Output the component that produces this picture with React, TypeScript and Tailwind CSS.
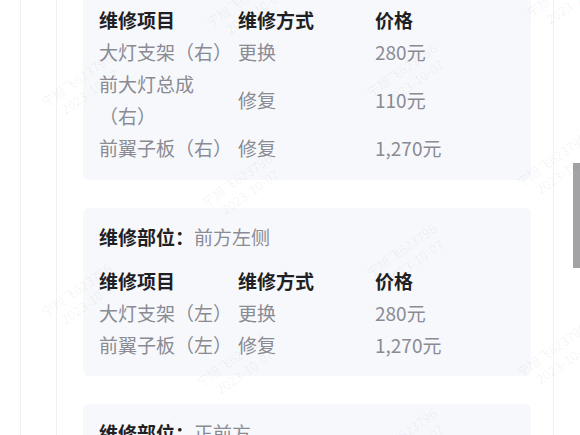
import type { ReactNode } from "react"

type Item = { name: string; way: string; price: string }

const FONT = { fontFamily: '"Noto Sans CJK SC", "Noto Sans", sans-serif' }

const WATERMARKS = [
  { x: 40, y: 70 },
  { x: 205, y: -10 },
  { x: 200, y: 170 },
  { x: 365, y: 60 },
  { x: 515, y: 150 },
  { x: 525, y: -20 },
  { x: 40, y: 280 },
  { x: 195, y: 350 },
  { x: 365, y: 240 },
  { x: 515, y: 340 },
  { x: 365, y: 425 },
]

function Card({ part, items, first }: { part?: string; items: Item[]; first?: boolean }) {
  return (
    <div className={`rounded-md bg-[#f7f8fc] pl-4 pr-[15px] ${first ? "rounded-t-none pt-[4px] pb-4" : "pt-[13px] pb-[15px]"}`}>
      {part && (
        <div className="mb-3 text-[19px] leading-8">
          <span className="font-bold text-[#1f1f24]">维修部位：</span>
          <span className="text-[#8a8b93]">{part}</span>
        </div>
      )}
      <div className="grid grid-cols-[139px_137px_1fr] text-[19px] leading-8">
        <div className="font-bold text-[#1f1f24]">维修项目</div>
        <div className="font-bold text-[#1f1f24]">维修方式</div>
        <div className="font-bold text-[#1f1f24]">价格</div>
        {items.map((it) => (
          <Row key={it.name} item={it} />
        ))}
      </div>
    </div>
  )
}

function Row({ item }: { item: Item }) {
  return (
    <>
      <div className="pr-1 text-[#8a8b93]">{item.name}</div>
      <div className="flex items-center text-[#8a8b93]">{item.way}</div>
      <div className="flex items-center text-[#8a8b93]">{item.price}</div>
    </>
  )
}

function Frame({ children }: { children: ReactNode }) {
  return (
    <div className="h-full border-x border-[#f1f1f3] pl-[35px]">
      <div className="h-full border-l border-[#f1f1f3] pl-[26px] pr-[22px]">{children}</div>
    </div>
  )
}

export default function App() {
  return (
    <div className="relative h-[435px] w-[580px] overflow-hidden bg-white" style={FONT}>
      <div className="h-full pl-[20px] pr-[26px]">
        <Frame>
          <div className="flex flex-col gap-[28px]">
            <Card
              first
              items={[
                { name: "大灯支架（右）", way: "更换", price: "280元" },
                { name: "前大灯总成（右）", way: "修复", price: "110元" },
                { name: "前翼子板（右）", way: "修复", price: "1,270元" },
              ]}
            />
            <Card
              part="前方左侧"
              items={[
                { name: "大灯支架（左）", way: "更换", price: "280元" },
                { name: "前翼子板（左）", way: "修复", price: "1,270元" },
              ]}
            />
            <Card part="正前方" items={[{ name: "前保险杠", way: "修复", price: "500元" }]} />
          </div>
        </Frame>
      </div>

      {/* scrollbar */}
      <div className="absolute right-0 top-[163px] h-[105px] w-[7px] bg-[#a3a3a6]" />

      {/* watermarks */}
      {WATERMARKS.map((w, i) => (
        <div
          key={i}
          className="pointer-events-none absolute -rotate-[35deg] whitespace-nowrap text-[13px] leading-[17px] text-[rgba(0,0,0,0.06)]"
          style={{ left: w.x, top: w.y }}
        >
          <div>宁旭飞623796</div>
          <div className="pl-3">2023-10-07</div>
        </div>
      ))}
    </div>
  )
}
